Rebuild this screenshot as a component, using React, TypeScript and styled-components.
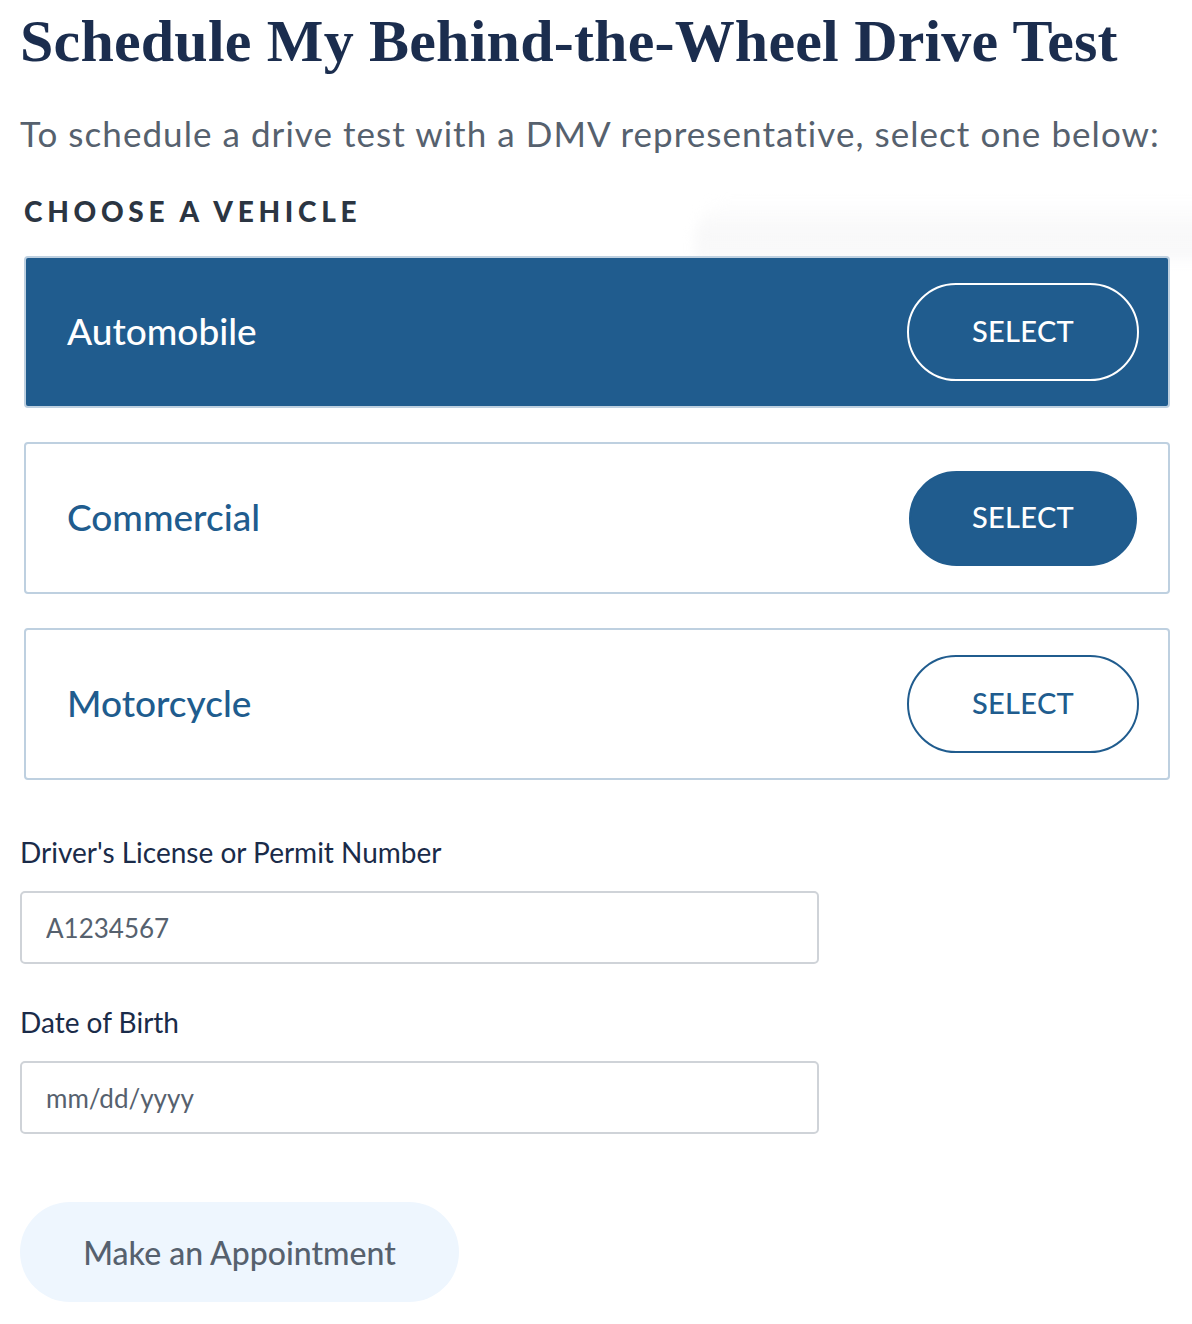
import React from "react";
import styled, { createGlobalStyle } from "styled-components";

const Global = createGlobalStyle`
  html, body { margin: 0; padding: 0; background: #ffffff; }
  body { font-family: Lato, "Open Sans", sans-serif; }
  * { box-sizing: border-box; }
`;

const Page = styled.main`
  position: relative;
  width: 1192px;
  min-height: 1324px;
  padding: 8px 20px 0 20px;
  overflow: hidden;
`;

const Glow = styled.div`
  position: absolute;
  left: 695px;
  top: 198px;
  width: 600px;
  height: 62px;
  border-radius: 40px 0 0 0;
  background: linear-gradient(180deg, rgba(246,246,247,0) 0%, rgba(247,247,248,0.85) 55%, rgba(249,249,250,1) 100%);
  filter: blur(6px);
  pointer-events: none;
`;

const Title = styled.h1`
  margin: 0;
  font-family: "Liberation Serif", "DejaVu Serif", serif;
  font-weight: 700;
  font-size: 60px;
  line-height: 66px;
  letter-spacing: 0.2px;
  color: #1b2d4e;
  white-space: nowrap;
`;

const Intro = styled.p`
  margin: 37px 0 0 0;
  font-size: 35px;
  line-height: 44px;
  letter-spacing: 1.05px;
  color: #56616e;
  white-space: nowrap;
`;

const VehicleSection = styled.section`
  position: relative;
  z-index: 1;
  padding: 0 2px 0 4px;
  display: flex;
  flex-direction: column;
  gap: 34px;
`;

const SectionHeading = styled.h2`
  margin: 39px 0 -6px 0;
  font-size: 28px;
  line-height: 34px;
  font-weight: 900;
  letter-spacing: 4.7px;
  color: #2b3542;
  white-space: nowrap;
`;

const Card = styled.div<{ $active?: boolean }>`
  height: 152px;
  display: flex;
  align-items: center;
  justify-content: space-between;
  padding: 0 29px 0 41px;
  border: 2px solid #bed0e0;
  border-radius: 4px;
  background: ${(p) => (p.$active ? "#205c8e" : "#ffffff")};
`;

const CardName = styled.span<{ $active?: boolean }>`
  font-size: 37px;
  font-weight: 500;
  margin-top: -4px;
  color: ${(p) => (p.$active ? "#ffffff" : "#205c8e")};
`;

type Variant = "onDark" | "filled" | "outline";

const SelectButton = styled.button<{ $variant: Variant }>`
  width: ${(p) => (p.$variant === "filled" ? "228px" : "232px")};
  height: ${(p) => (p.$variant === "filled" ? "95px" : "98px")};
  margin-right: ${(p) => (p.$variant === "filled" ? "2px" : "0")};
  padding: 0 0 3px 0;
  border-radius: 49px;
  font-family: Lato, sans-serif;
  font-size: 29px;
  font-weight: 500;
  letter-spacing: 0.3px;
  cursor: pointer;
  border: 2px solid
    ${(p) => (p.$variant === "onDark" ? "#ffffff" : "#205c8e")};
  background: ${(p) => (p.$variant === "filled" ? "#205c8e" : "transparent")};
  color: ${(p) => (p.$variant === "outline" ? "#205c8e" : "#ffffff")};
`;

const Form = styled.div`
  margin-top: 54px;
  display: flex;
  flex-direction: column;
`;

const Label = styled.label`
  display: block;
  font-size: 28px;
  line-height: 36px;
  color: #1a2b49;
  margin-bottom: 21px;
`;

const Input = styled.input`
  display: block;
  width: 799px;
  height: 73px;
  padding: 0 24px;
  border: 2px solid #cfd3d8;
  border-radius: 5px;
  font-family: Lato, sans-serif;
  font-size: 26px;
  color: #56616e;
  background: #fff;
  outline: none;
  margin-bottom: 40px;
  &::placeholder { color: #56616e; opacity: 1; }
`;

const Submit = styled.button`
  margin-top: 28px;
  width: 439px;
  height: 100px;
  border: none;
  border-radius: 50px;
  background: #eef6fe;
  color: #56616e;
  font-family: Lato, sans-serif;
  font-size: 32px;
  font-weight: 500;
  cursor: pointer;
`;

const vehicles: { name: string; active?: boolean; variant: Variant }[] = [
  { name: "Automobile", active: true, variant: "onDark" },
  { name: "Commercial", variant: "filled" },
  { name: "Motorcycle", variant: "outline" },
];

export default function App() {
  return (
    <>
      <Global />
      <Page>
        <Glow />
        <Title>Schedule My Behind-the-Wheel Drive Test</Title>
        <Intro>To schedule a drive test with a DMV representative, select one below:</Intro>
        <VehicleSection>
          <SectionHeading>CHOOSE A VEHICLE</SectionHeading>
          {vehicles.map((v) => (
            <Card key={v.name} $active={v.active}>
              <CardName $active={v.active}>{v.name}</CardName>
              <SelectButton $variant={v.variant}>SELECT</SelectButton>
            </Card>
          ))}
        </VehicleSection>
        <Form>
          <Label htmlFor="dl">Driver's License or Permit Number</Label>
          <Input id="dl" defaultValue="A1234567" />
          <Label htmlFor="dob">Date of Birth</Label>
          <Input id="dob" placeholder="mm/dd/yyyy" />
          <div>
            <Submit>Make an Appointment</Submit>
          </div>
        </Form>
      </Page>
    </>
  );
}
